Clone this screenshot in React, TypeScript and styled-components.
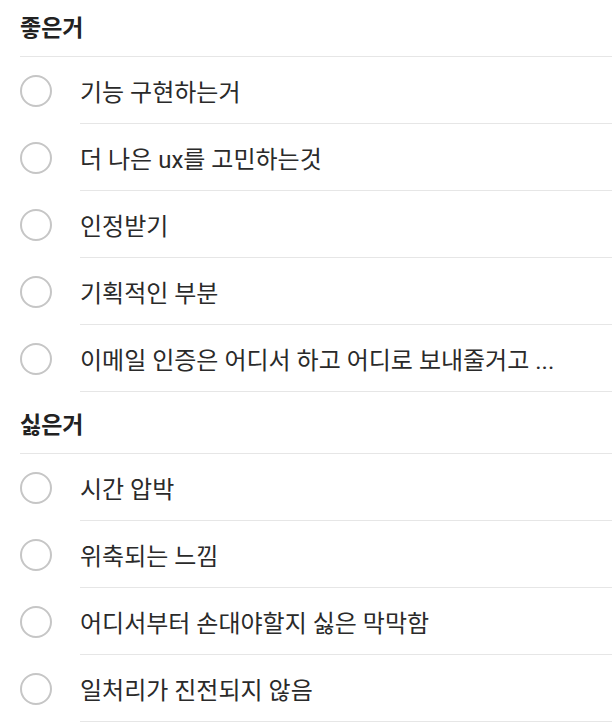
import React from 'react';
import styled, {createGlobalStyle} from "styled-components";

const GlobalStyle = createGlobalStyle`
  html, body {
    margin: 0;
    padding: 0;
    background: #fff;
    overflow: hidden;
  }

  body {
    font-family: Roboto, "Noto Sans CJK KR", sans-serif;
  }
`

type Group = {
    title: string
    items: string[]
}

const groups: Group[] = [
    {
        title: '좋은거',
        items: ['기능 구현하는거', '더 나은 ux를 고민하는것', '인정받기', '기획적인 부분', '이메일 인증은 어디서 하고 어디로 보내줄거고 ...'],
    },
    {
        title: '싫은거',
        items: ['시간 압박', '위축되는 느낌', '어디서부터 손대야할지 싫은 막막함', '일처리가 진전되지 않음'],
    },
]

export default function App() {
    return (
        <>
            <GlobalStyle/>
            <StyledList>
                {groups.map(group => (
                    <section key={group.title}>
                        <GroupTitle>{group.title}</GroupTitle>
                        {group.items.map(item => (
                            <Row key={item}>
                                <Radio/>
                                <Label>{item}</Label>
                            </Row>
                        ))}
                    </section>
                ))}
            </StyledList>
        </>
    );
}

const StyledList = styled.main`
  // screenshot starts a few pixels scrolled down
  margin-top: -5px;
  width: 100%;
`

const GroupTitle = styled.h2`
  margin: 0 0 0 20px;
  height: 61px;
  display: flex;
  align-items: center;
  border-bottom: 1px solid #e6e6e6;
  font-size: 23px;
  font-weight: 700;
  color: #222;
`

const Row = styled.div`
  display: flex;
  align-items: center;
  padding-left: 20px;
`

const Radio = styled.span`
  box-sizing: border-box;
  flex: none;
  width: 32px;
  height: 32px;
  border-radius: 50%;
  border: 2px solid #c6c6c6;
  margin-right: 28px;
`

const Label = styled.div`
  flex: 1;
  height: 66px;
  display: flex;
  align-items: center;
  border-bottom: 1px solid #e6e6e6;
  font-size: 24px;
  color: #2a2a2a;
  white-space: nowrap;
`
